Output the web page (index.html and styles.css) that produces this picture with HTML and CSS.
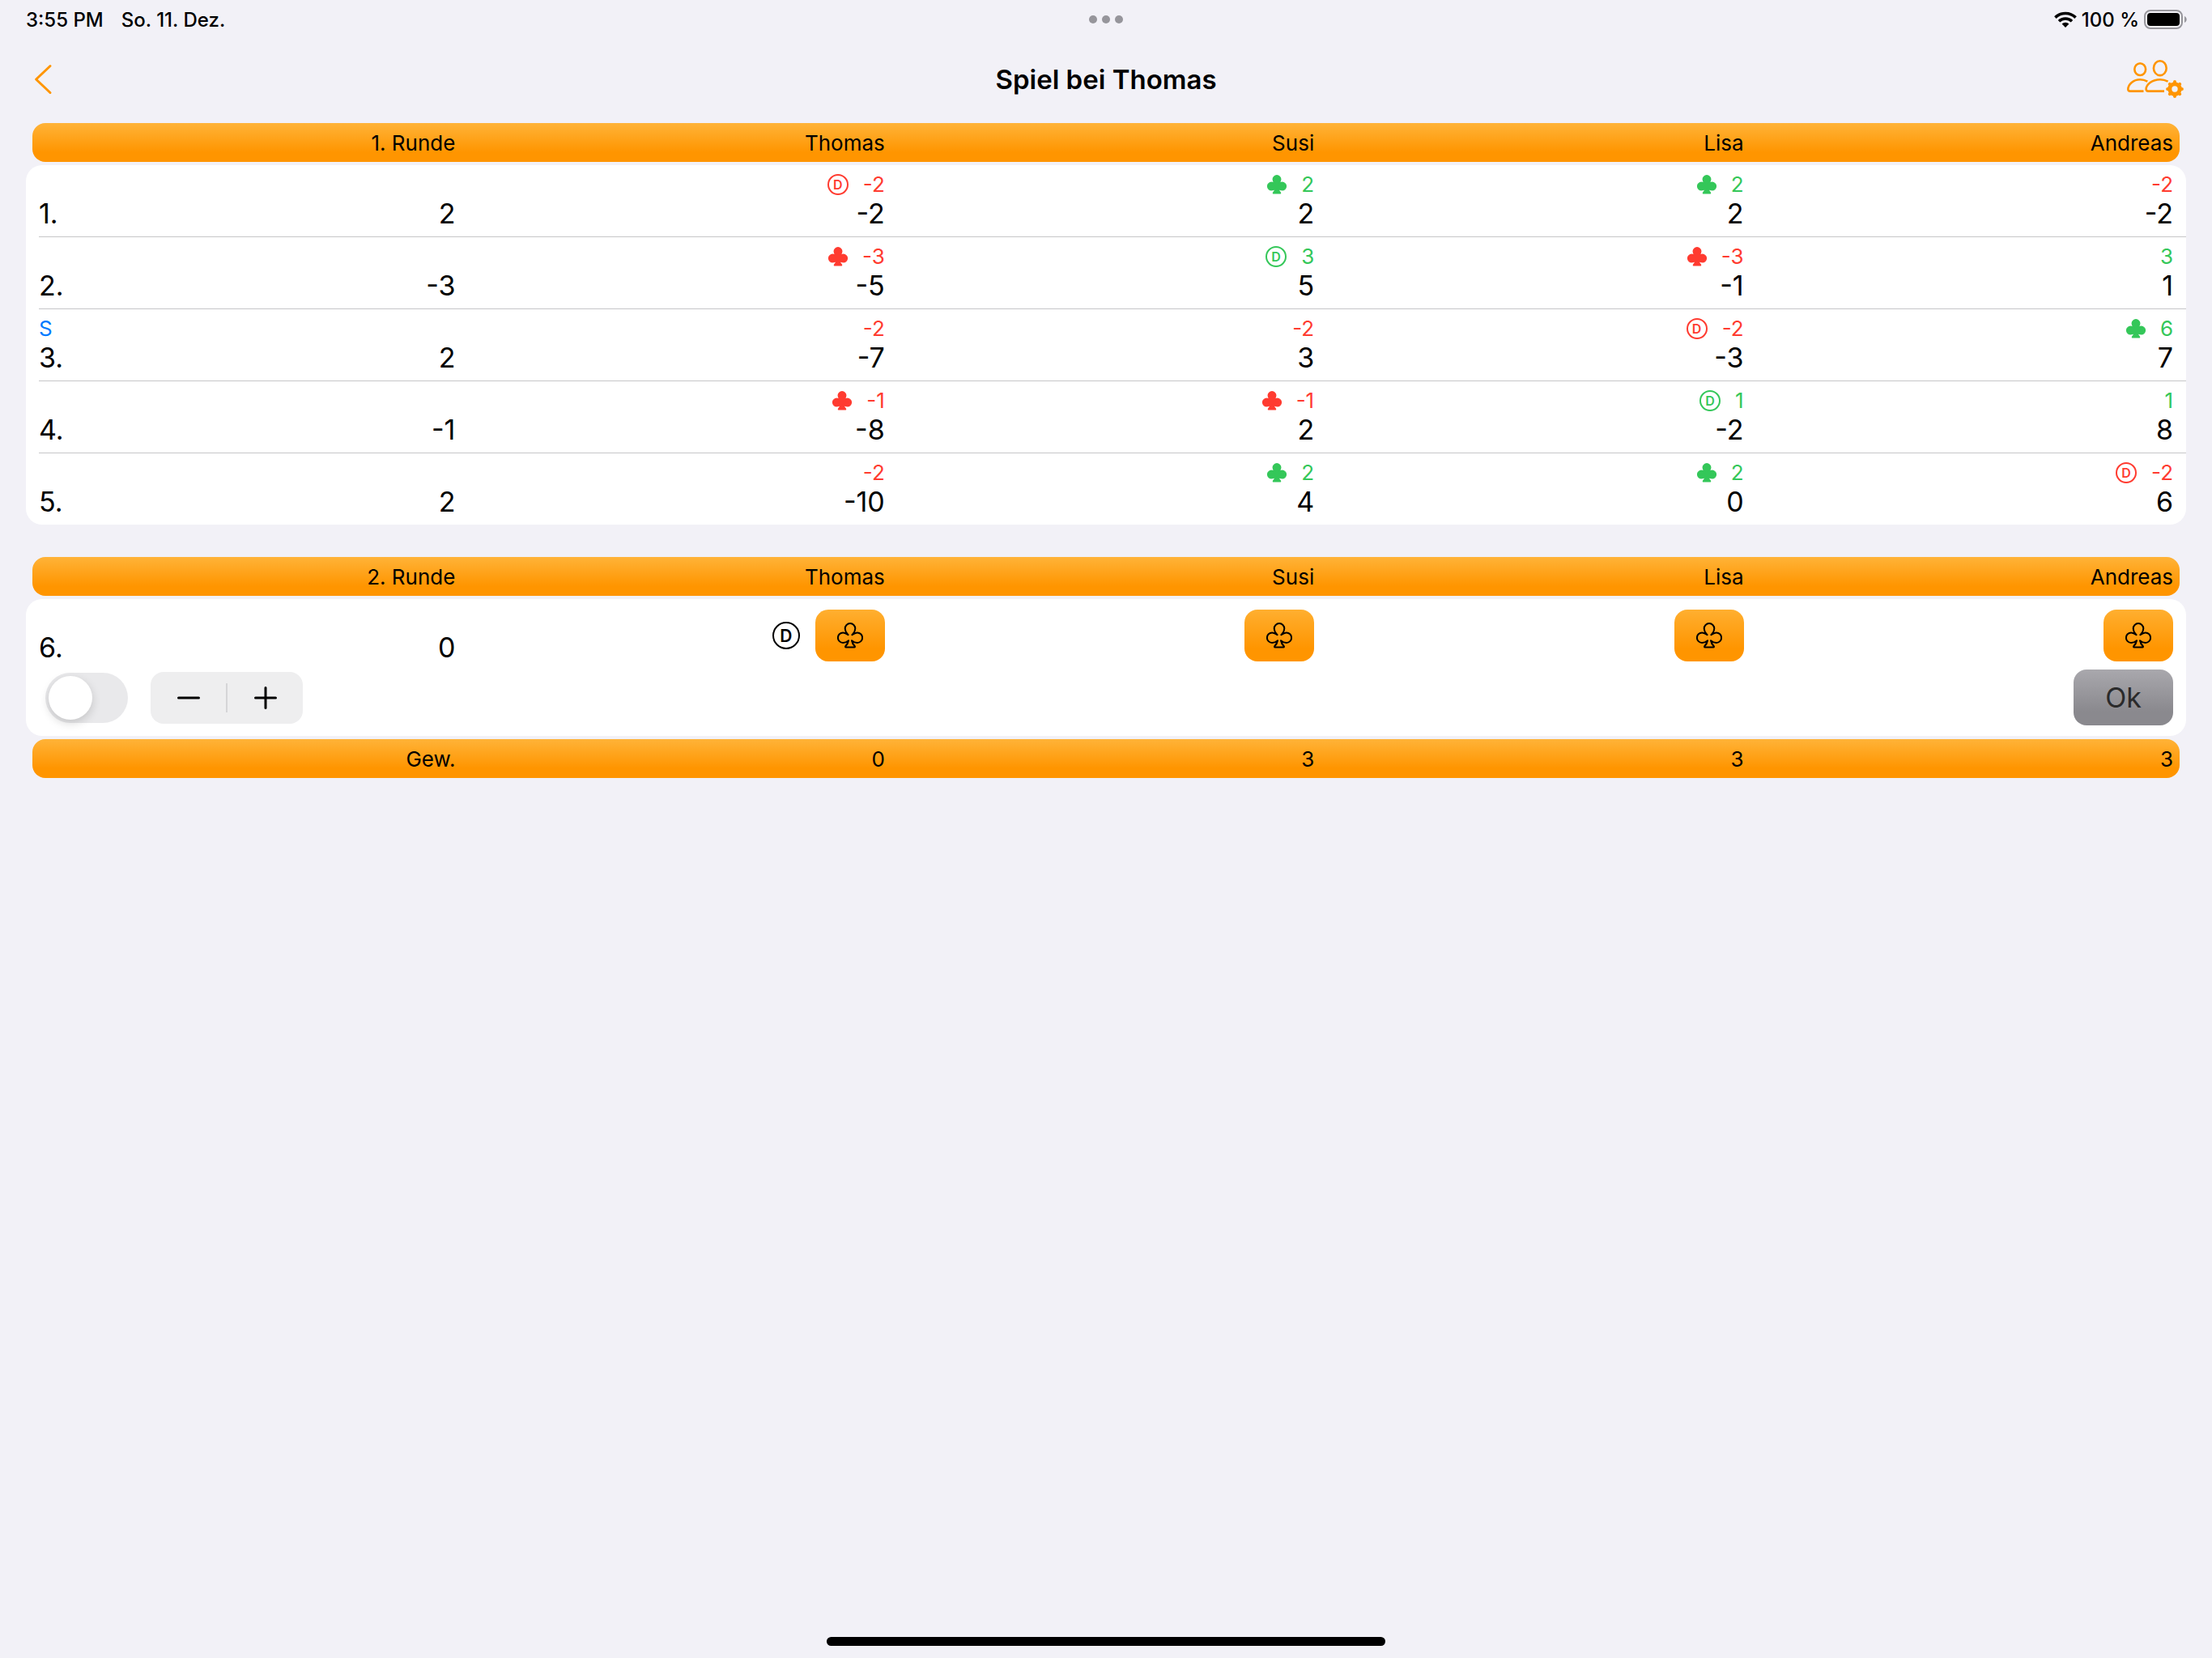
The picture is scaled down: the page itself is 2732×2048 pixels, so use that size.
FILE: index.html
```html
<!DOCTYPE html>
<html lang="de">
<head>
<meta charset="utf-8">
<meta name="viewport" content="width=device-width, initial-scale=1">
<title>Spiel bei Thomas</title>
<link rel="stylesheet" href="styles.css">
</head>
<body>
<svg class="sprite" aria-hidden="true">
  <symbol id="club" viewBox="0 0 32 32">
    <path d="M13.6 15.2C12.5 13.8 9.7 11.5 9.7 7.4A6.3 6.3 0 0 1 22.3 7.4C22.3 11.5 19.5 13.8 18.4 15.2C20 14 22.5 12.4 24.8 12.4A6.3 6.3 0 0 1 24.8 25C22 25 19.5 23.5 18 22.2C18.5 25 20.5 28 21.8 29.3Q22.3 30.4 21.3 30.4H10.7Q9.7 30.4 10.2 29.3C11.5 28 13.5 25 14 22.2C12.5 23.5 10 25 7.2 25A6.3 6.3 0 0 1 7.2 12.4C9.5 12.4 12 14 13.6 15.2Z" stroke="currentColor" stroke-width="2" stroke-linejoin="round"/>
  </symbol>
</svg>

<div class="status">
  <div class="status-side"><span>3:55 PM</span><span>So. 11. Dez.</span></div>
  <div class="dots"><i></i><i></i><i></i></div>
  <div class="status-side status-right">
    <svg class="wifi" viewBox="0 0 28 20" aria-hidden="true">
      <g fill="none" stroke="currentColor" stroke-width="3.6">
        <path d="M1.4 7.6A18 18 0 0 1 26.6 7.6"/>
        <path d="M6 12.2A11.6 11.6 0 0 1 22 12.2"/>
      </g>
      <path d="M14 20L9.6 15.6A6.4 6.4 0 0 1 18.4 15.6Z" fill="currentColor"/>
    </svg>
    <span>100 %</span>
    <svg class="battery" viewBox="0 0 54 24" aria-hidden="true">
      <rect x="1" y="1" width="46" height="22" rx="7" fill="none" stroke="#98979d" stroke-width="2"/>
      <rect x="4" y="4" width="40" height="16" rx="4"/>
      <path d="M50 8C53.6 9.4 53.6 14.6 50 16Z" fill="#98979d"/>
    </svg>
  </div>
</div>

<header class="nav">
  <button class="icon-btn icon-start" type="button" aria-label="Zurück">
    <svg class="chevron" viewBox="0 0 26 38"><path d="M22 2.5L4.6 19L22 35.5" fill="none" stroke="currentColor" stroke-width="3" stroke-linecap="round" stroke-linejoin="round"/></svg>
  </button>
  <h1>Spiel bei Thomas</h1>
  <button class="icon-btn icon-end" type="button" aria-label="Spieler verwalten">
    <svg class="players" viewBox="0 0 70 48" fill="none" stroke="currentColor" stroke-width="2.6" stroke-linejoin="round">
      <ellipse cx="16.2" cy="11.6" rx="6.9" ry="7.4"/>
      <ellipse cx="40.8" cy="10.2" rx="7.9" ry="8.9"/>
      <path d="M25.3 26.6C22.500 25 19.5 24.2 16.2 24.2C8 24.2 1.3 30 1.3 36.3Q1.3 38.6 4 38.6H20.5"/>
      <path d="M50.6 26.6C47.5 25 44.5 24.2 41 24.2C31 24.2 23.6 30.5 23.6 36.3Q23.6 38.6 26.3 38.6H46"/>
      <circle cx="59" cy="36" r="6.2" stroke-width="5"/>
      <path stroke-width="4" stroke-linecap="round" d="M59 29V27.100M59 43V44.9M52 36H50.1M66 36H67.9M54.1 31.1L52.8 29.8M63.9 31.1L65.2 29.8M54.1 40.9L52.8 42.2M63.9 40.9L65.2 42.2"/>
    </svg>
  </button>
</header>

<main>
  <table class="round">
    <thead>
      <tr class="bar"><th scope="col">1. Runde</th><th scope="col">Thomas</th><th scope="col">Susi</th><th scope="col">Lisa</th><th scope="col">Andreas</th></tr>
    </thead>
    <tbody class="card">
      <tr class="row">
        <th scope="row">1.</th><td class="value">2</td>
        <td><div class="delta lose"><span class="dealer">D</span>-2</div><div class="total">-2</div></td>
        <td><div class="delta win"><svg class="club"><use href="#club"/></svg>2</div><div class="total">2</div></td>
        <td><div class="delta win"><svg class="club"><use href="#club"/></svg>2</div><div class="total">2</div></td>
        <td><div class="delta lose">-2</div><div class="total">-2</div></td>
      </tr>
      <tr class="row">
        <th scope="row">2.</th><td class="value">-3</td>
        <td><div class="delta lose"><svg class="club"><use href="#club"/></svg>-3</div><div class="total">-5</div></td>
        <td><div class="delta win"><span class="dealer">D</span>3</div><div class="total">5</div></td>
        <td><div class="delta lose"><svg class="club"><use href="#club"/></svg>-3</div><div class="total">-1</div></td>
        <td><div class="delta win">3</div><div class="total">1</div></td>
      </tr>
      <tr class="row">
        <th scope="row"><div class="solo">S</div>3.</th><td class="value">2</td>
        <td><div class="delta lose">-2</div><div class="total">-7</div></td>
        <td><div class="delta lose">-2</div><div class="total">3</div></td>
        <td><div class="delta lose"><span class="dealer">D</span>-2</div><div class="total">-3</div></td>
        <td><div class="delta win"><svg class="club"><use href="#club"/></svg>6</div><div class="total">7</div></td>
      </tr>
      <tr class="row">
        <th scope="row">4.</th><td class="value">-1</td>
        <td><div class="delta lose"><svg class="club"><use href="#club"/></svg>-1</div><div class="total">-8</div></td>
        <td><div class="delta lose"><svg class="club"><use href="#club"/></svg>-1</div><div class="total">2</div></td>
        <td><div class="delta win"><span class="dealer">D</span>1</div><div class="total">-2</div></td>
        <td><div class="delta win">1</div><div class="total">8</div></td>
      </tr>
      <tr class="row">
        <th scope="row">5.</th><td class="value">2</td>
        <td><div class="delta lose">-2</div><div class="total">-10</div></td>
        <td><div class="delta win"><svg class="club"><use href="#club"/></svg>2</div><div class="total">4</div></td>
        <td><div class="delta win"><svg class="club"><use href="#club"/></svg>2</div><div class="total">0</div></td>
        <td><div class="delta lose"><span class="dealer">D</span>-2</div><div class="total">6</div></td>
      </tr>
    </tbody>
  </table>

  <table class="round">
    <thead>
      <tr class="bar"><th scope="col">2. Runde</th><th scope="col">Thomas</th><th scope="col">Susi</th><th scope="col">Lisa</th><th scope="col">Andreas</th></tr>
    </thead>
    <tbody class="card entry">
      <tr class="row">
        <th scope="row">6.</th><td class="value">0</td>
        <td class="pick"><span class="dealer dealer-big">D</span><button class="club-btn" type="button" aria-label="Thomas"><svg class="club-line"><use href="#club"/></svg></button></td>
        <td class="pick"><button class="club-btn" type="button" aria-label="Susi"><svg class="club-line"><use href="#club"/></svg></button></td>
        <td class="pick"><button class="club-btn" type="button" aria-label="Lisa"><svg class="club-line"><use href="#club"/></svg></button></td>
        <td class="pick"><button class="club-btn" type="button" aria-label="Andreas"><svg class="club-line"><use href="#club"/></svg></button></td>
      </tr>
      <tr class="controls">
        <td class="controls-cell">
          <input class="switch" type="checkbox" role="switch" aria-label="Solo">
          <div class="stepper">
            <button type="button" aria-label="Weniger"><svg viewBox="0 0 28 28"><path d="M1.5 14H26.5"/></svg></button>
            <button type="button" aria-label="Mehr"><svg viewBox="0 0 28 28"><path d="M1.5 14H26.5M14 1.5V26.5"/></svg></button>
          </div>
          <button class="ok" type="button">Ok</button>
        </td>
      </tr>
    </tbody>
    <tfoot>
      <tr class="bar"><th scope="row">Gew.</th><td>0</td><td>3</td><td>3</td><td>3</td></tr>
    </tfoot>
  </table>
</main>

<div class="home"></div>
</body>
</html>
```
FILE: styles.css
```css
:root {
  --orange: #ff9500;
  --red: #ff3b30;
  --green: #34c759;
  --blue: #007aff;
}

* { box-sizing: border-box; }

body {
  margin: 0;
  min-height: 100vh;
  display: flex;
  flex-direction: column;
  background: #f2f1f7;
  color: #000;
  font-family: Inter, "Liberation Sans", sans-serif;
  font-size: 26px;
}

button {
  padding: 0;
  border: 0;
  background: none;
  color: inherit;
  font: inherit;
}

.sprite { position: absolute; width: 0; height: 0; }

/* status bar */
.status {
  height: 48px;
  padding: 0 30px;
  display: grid;
  grid-template-columns: 1fr auto 1fr;
  align-items: center;
  font-size: 24px;
  font-weight: 500;
}
.status-side { display: flex; align-items: center; gap: 22px; padding-left: 2px; }
.status-right { justify-content: flex-end; gap: 6px; }
.dots { display: flex; gap: 6px; }
.dots i { width: 10px; height: 10px; border-radius: 50%; background: #96959b; }
.wifi { width: 28px; height: 20px; }
.battery { width: 54px; height: 24px; }

/* navigation bar */
.nav {
  height: 100px;
  padding: 0 35px;
  display: grid;
  grid-template-columns: 1fr auto 1fr;
  align-items: center;
}
.nav h1 { margin: 0; font-size: 33px; line-height: 40px; font-weight: 600; }
.icon-btn { display: flex; color: var(--orange); }
.icon-start { justify-self: start; padding-left: 5px; }
.icon-end { justify-self: end; }
.chevron { width: 26px; height: 38px; }
.players { width: 70px; height: 48px; }

/* rounds */
main { padding: 4px 32px; display: flex; flex-direction: column; gap: 36px; }
.round, .round thead, .round tbody, .round tfoot { display: block; }
.round th, .round td { padding: 0; font-weight: 400; text-align: right; }

.bar, .row {
  display: grid;
  grid-template-columns: repeat(5, 1fr);
  column-gap: 16px;
}
.bar {
  height: 48px;
  margin: 0 8px;
  padding: 0 8px;
  align-items: center;
  border-radius: 16px;
  background: linear-gradient(#ffb338, var(--orange) 75%);
}

.card { margin: 4px 0; border-radius: 20px; background: #fff; }
.row {
  margin-left: 16px;
  padding: 8px 16px 8px 0;
  align-items: end;
  border-bottom: 1px solid #c6c6c8;
  font-size: 34px;
  line-height: 40px;
}
.row:last-child { border-bottom: 0; }
.row th, .row .value { grid-area: 1 / 1; }
.row th { justify-self: start; text-align: left; }

.delta, .solo { font-size: 26px; line-height: 32px; }
.delta { display: flex; justify-content: flex-end; align-items: center; gap: 18px; }
.solo { color: var(--blue); }
.win { color: var(--green); }
.lose { color: var(--red); }

.club { width: 24px; height: 24px; fill: currentColor; }
.dealer {
  width: 26px;
  height: 26px;
  display: flex;
  align-items: center;
  justify-content: center;
  border: 2px solid currentColor;
  border-radius: 50%;
  font-size: 16px;
  line-height: 16px;
  font-weight: 600;
}
.dealer-big { width: 34px; height: 34px; font-size: 21px; line-height: 21px; }

/* entry of the current game */
.entry { padding: 13px 0; }
.entry .row { padding: 0 16px 0 0; border: 0; line-height: 34px; }
.pick { display: flex; justify-content: flex-end; align-items: center; gap: 19px; }
.club-btn {
  width: 86px;
  height: 64px;
  display: flex;
  align-items: center;
  justify-content: center;
  border-radius: 16px;
  background: linear-gradient(#ffaf30, var(--orange) 75%);
}
.club-line { width: 32px; height: 32px; fill: none; }

.controls { display: block; padding: 10px 16px 0 24px; }
.controls-cell { display: flex; align-items: center; gap: 28px; }
.switch {
  appearance: none;
  width: 102px;
  height: 62px;
  margin: 0;
  padding: 4px;
  border-radius: 31px;
  background: #e9e9eb;
}
.switch::before {
  content: "";
  display: block;
  width: 54px;
  height: 54px;
  border-radius: 50%;
  background: #fff;
  box-shadow: 0 4px 12px rgba(0, 0, 0, .16);
}
.switch:checked { background: var(--green); }
.switch:checked::before { margin-left: auto; }

.stepper {
  width: 188px;
  height: 64px;
  display: flex;
  align-items: center;
  border-radius: 16px;
  background: #eeeeef;
}
.stepper button { flex: 1; height: 36px; display: flex; align-items: center; justify-content: center; }
.stepper button:first-child { border-right: 2px solid #d5d5d7; }
.stepper svg { width: 28px; height: 28px; fill: none; stroke: currentColor; stroke-width: 3; stroke-linecap: round; }

.ok {
  width: 123px;
  height: 69px;
  margin-left: auto;
  border-radius: 16px;
  background: linear-gradient(#a9a8ad, #8a898e 75%);
  color: #2a2a2b;
  font-size: 34px;
}

.home {
  width: 690px;
  max-width: 50%;
  height: 11px;
  margin: auto auto 15px;
  border-radius: 6px;
  background: #000;
}
```
